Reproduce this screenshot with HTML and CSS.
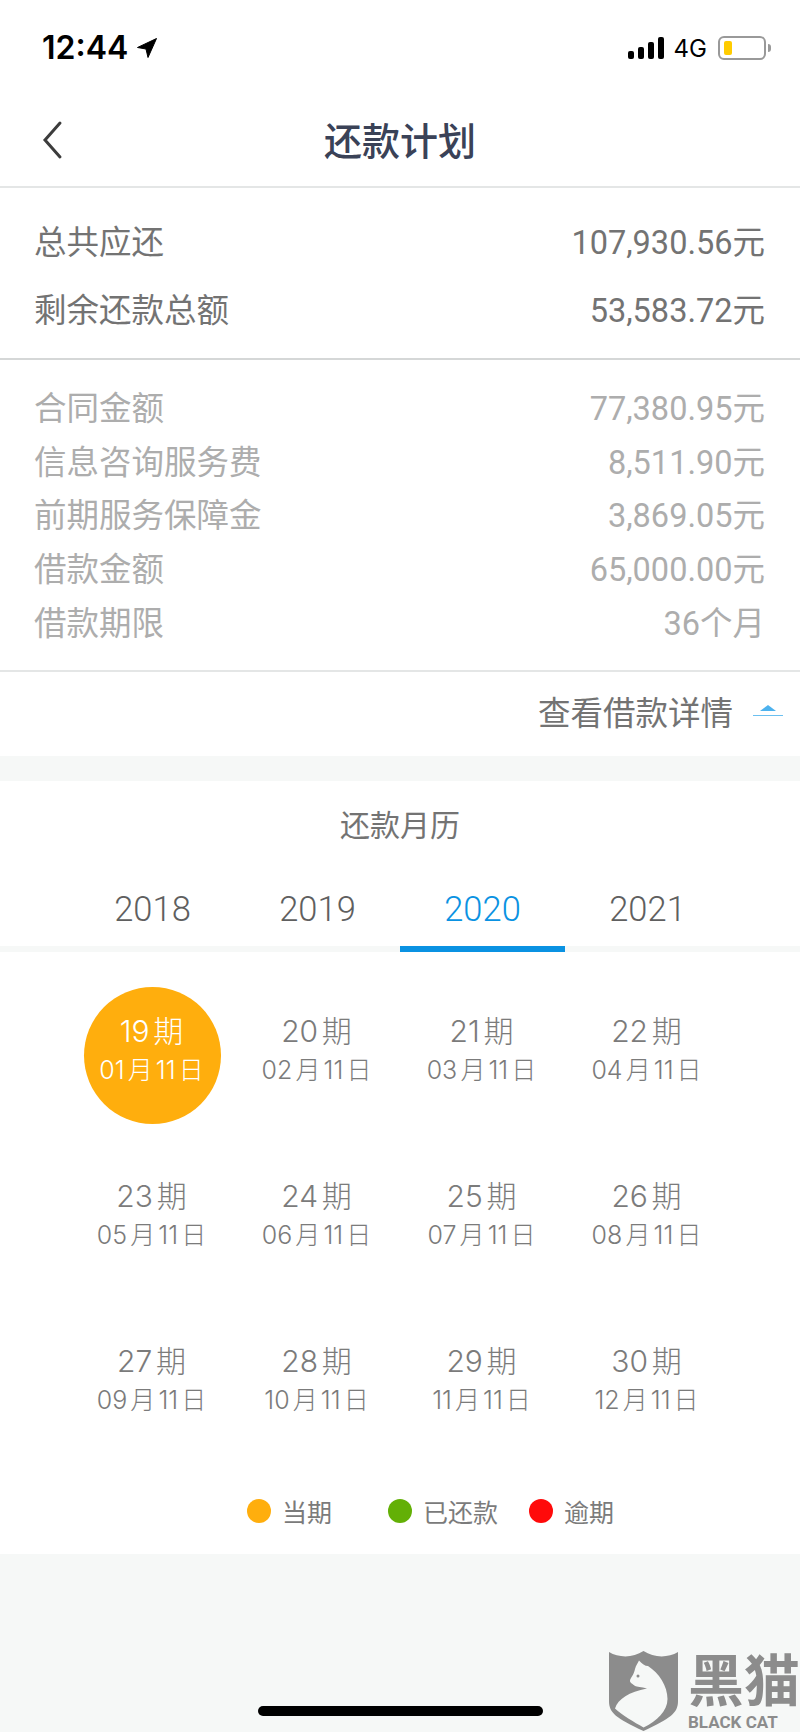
FILE: index.html
```html
<!DOCTYPE html>
<html lang="zh-CN">

<head>
    <meta charset="UTF-8">
    <meta name="viewport" content="width=device-width, initial-scale=1.0">
    <title>还款计划</title>
    <link rel="stylesheet" href="styles.css">
</head>

<body>
    <div class="page">
        <div class="status-bar">
            <div class="status-time">
                <span>12:44</span>
                <svg class="status-arrow" viewBox="0 0 20 20">
                    <path d="M19.5 0.5 L0.5 9.5 L9 11 L11 19.5 Z" fill="#000" stroke="#000" stroke-width="1" stroke-linejoin="round" />
                </svg>
            </div>
            <div class="status-right">
                <div class="signal">
                    <i class="bar-1"></i>
                    <i class="bar-2"></i>
                    <i class="bar-3"></i>
                    <i class="bar-4"></i>
                </div>
                <span class="network">4G</span>
                <div class="battery">
                    <div class="battery-level"></div>
                </div>
                <div class="battery-tip"></div>
            </div>
        </div>

        <div class="nav-bar">
            <svg class="nav-back" viewBox="0 0 24 40">
                <path d="M20 3 L5 20 L20 37" fill="none" stroke="#3c3c3c" stroke-width="3" stroke-linecap="round" stroke-linejoin="miter" />
            </svg>
            <h1 class="nav-title">还款计划</h1>
        </div>

        <div class="summary">
            <div class="summary-row"><span>总共应还</span><span>107,930.56元</span></div>
            <div class="summary-row"><span>剩余还款总额</span><span>53,583.72元</span></div>
        </div>

        <div class="details">
            <div class="details-row"><span>合同金额</span><span>77,380.95元</span></div>
            <div class="details-row"><span>信息咨询服务费</span><span>8,511.90元</span></div>
            <div class="details-row"><span>前期服务保障金</span><span>3,869.05元</span></div>
            <div class="details-row"><span>借款金额</span><span>65,000.00元</span></div>
            <div class="details-row"><span>借款期限</span><span>36个月</span></div>
        </div>

        <div class="more-row">
            <span>查看借款详情</span>
            <div class="more-icon">
                <svg viewBox="0 0 30 12">
                    <path d="M15 0 L23 6 L7 6 Z" fill="#4db2ee" />
                    <path d="M0 10.5 H30" stroke="#6cc0f0" stroke-width="1" />
                </svg>
            </div>
        </div>

        <div class="calendar">
            <div class="calendar-title">还款月历</div>

            <div class="tabs">
                <div class="tab">2018</div>
                <div class="tab">2019</div>
                <div class="tab tab-active">2020</div>
                <div class="tab">2021</div>
            </div>

            <div class="periods">
                <div class="period period-current"><b>19期</b><span>01月11日</span></div>
                <div class="period"><b>20期</b><span>02月11日</span></div>
                <div class="period"><b>21期</b><span>03月11日</span></div>
                <div class="period"><b>22期</b><span>04月11日</span></div>
                <div class="period"><b>23期</b><span>05月11日</span></div>
                <div class="period"><b>24期</b><span>06月11日</span></div>
                <div class="period"><b>25期</b><span>07月11日</span></div>
                <div class="period"><b>26期</b><span>08月11日</span></div>
                <div class="period"><b>27期</b><span>09月11日</span></div>
                <div class="period"><b>28期</b><span>10月11日</span></div>
                <div class="period"><b>29期</b><span>11月11日</span></div>
                <div class="period"><b>30期</b><span>12月11日</span></div>
            </div>

            <div class="legend">
                <div class="legend-item"><i class="dot dot-orange"></i>当期</div>
                <div class="legend-item"><i class="dot dot-green"></i>已还款</div>
                <div class="legend-item"><i class="dot dot-red"></i>逾期</div>
            </div>
        </div>

        <div class="home-bar"></div>

        <div class="watermark">
            <svg class="watermark-shield" viewBox="0 0 69 80">
                <path d="M0 1 C10 7 24 7 34.5 0 C45 7 59 7 69 1 V50 C69 62 62 67 34.5 80 C7 67 0 62 0 50 Z" fill="#8c8c8c" />
                <path d="M30 9.5 C33 13 36 15 39 15 C50 22 58.5 35 58.5 48 C58.5 60 48 70 34.5 76.5 C25 71 13 64 6 57.5 C9 48 20 41 38 37.5 C32 36 28 36 26 35 C24 33 21 32 21 30 C21 27 25 24 26 18 C27 14 29 12 30 9.5 Z" fill="#f6f8f7" />
                <circle cx="29" cy="25" r="1.5" fill="#8c8c8c" />
            </svg>
            <div class="watermark-text">
                <div class="watermark-cn">黑猫</div>
                <div class="watermark-en">BLACK CAT</div>
            </div>
        </div>
    </div>
</body>

</html>
```

FILE: styles.css
```css
* {
    box-sizing: border-box;
}

body {
    margin: 0;
    background-color: #f6f8f7;
    font-family: Roboto, "Noto Sans CJK SC", sans-serif;
}

.page {
    position: relative;
    width: 800px;
    height: 1732px;
    overflow: hidden;
}

/* status bar */
.status-bar {
    height: 92px;
    padding: 30px 29px 0 42px;
    background-color: #fff;
    display: flex;
    justify-content: space-between;
    align-items: flex-start;
}

.status-time {
    display: flex;
    align-items: center;
    gap: 9px;
    font-family: Inter, sans-serif;
    font-size: 32px;
    font-weight: 600;
    line-height: 36px;
    color: #000;
}

.status-arrow {
    width: 20px;
    height: 20px;
}

.status-right {
    display: flex;
    align-items: center;
    height: 36px;
}

.signal {
    display: flex;
    align-items: flex-end;
    gap: 4px;
    height: 22px;
    margin-right: 10px;
}

.signal i {
    display: block;
    width: 6px;
    background-color: #000;
    border-radius: 2px;
}

.signal .bar-1 { height: 8px; }
.signal .bar-2 { height: 12px; }
.signal .bar-3 { height: 17px; }
.signal .bar-4 { height: 22px; }

.network {
    font-family: Inter, sans-serif;
    font-size: 24px;
    font-weight: 400;
    color: #000;
    margin-right: 11px;
}

.battery {
    width: 48px;
    height: 24px;
    padding: 3px 4px;
    border: 2px solid #999;
    border-radius: 6px;
}

.battery-level {
    width: 8px;
    height: 100%;
    background-color: #ffcc00;
    border-radius: 2px;
}

.battery-tip {
    width: 3px;
    height: 8px;
    margin-left: 2px;
    background-color: #999;
    border-radius: 0 3px 3px 0;
}

/* nav */
.nav-bar {
    position: relative;
    height: 96px;
    background-color: #fff;
    border-bottom: 2px solid #e4e6e6;
    display: flex;
    align-items: center;
    justify-content: center;
    padding-bottom: 2px;
}

.nav-back {
    position: absolute;
    left: 38px;
    top: 28px;
    width: 28px;
    height: 40px;
}

.nav-title {
    margin: 0;
    font-size: 38px;
    font-weight: 500;
    color: #3a4257;
}

/* amounts */
.summary {
    padding: 17px 35px 17px 34px;
    background-color: #fff;
    border-bottom: 2px solid #d5d7d7;
}

.summary-row {
    height: 68px;
    display: flex;
    justify-content: space-between;
    align-items: center;
    font-size: 32.5px;
    color: #737373;
}

.details {
    padding: 19px 35px 23px 34px;
    background-color: #fff;
    border-bottom: 2px solid #e4e6e6;
}

.details-row {
    height: 53.6px;
    display: flex;
    justify-content: space-between;
    align-items: center;
    font-size: 32.5px;
    color: #adadad;
}

.more-row {
    height: 84px;
    padding: 0 17px 6px 0;
    background-color: #fff;
    display: flex;
    justify-content: flex-end;
    align-items: center;
    font-size: 32.5px;
    color: #737373;
}

.more-icon {
    width: 30px;
    height: 12px;
    margin-left: 20px;
    display: flex;
}

/* calendar */
.calendar {
    margin-top: 25px;
    height: 773px;
    background-color: #fff;
}

.calendar-title {
    height: 88px;
    padding-bottom: 4px;
    display: flex;
    justify-content: center;
    align-items: center;
    font-size: 30px;
    color: #737373;
}

.tabs {
    height: 83px;
    padding-left: 70px;
    display: grid;
    grid-template-columns: repeat(4, 165px);
    border-bottom: 6px solid #f6f8f7;
}

.tab {
    height: 83px;
    padding-top: 4px;
    display: flex;
    justify-content: center;
    align-items: center;
    font-size: 34.5px;
    font-weight: 300;
    color: #5f5f5f;
    border-bottom: 6px solid transparent;
}

.tab-active {
    color: #0a92e2;
    border-bottom-color: #0a92e2;
}

.periods {
    padding: 35px 0 0 70px;
    display: grid;
    grid-template-columns: repeat(4, 165px);
    grid-auto-rows: 137px;
    row-gap: 28px;
}

.period {
    width: 137px;
    margin: 0 auto;
    padding: 0 2px 8px 0;
    border-radius: 50%;
    display: flex;
    flex-direction: column;
    justify-content: center;
    align-items: center;
    font-family: Inter, "Noto Sans CJK SC", sans-serif;
    font-weight: 300;
    color: #7b7b7b;
    text-autospace: normal;
}

.period b {
    font-size: 30px;
    font-weight: 300;
    line-height: 37px;
    margin-bottom: 1px;
}

.period span {
    font-size: 25px;
    line-height: 38px;
    white-space: nowrap;
}

.period-current {
    background-color: #ffae0d;
    color: #fff;
}

.legend {
    margin-top: 35px;
    height: 44px;
    padding-left: 247px;
    display: grid;
    grid-template-columns: repeat(3, 141px);
}

.legend-item {
    display: flex;
    align-items: center;
    gap: 11px;
    font-size: 25px;
    color: #7b7b7b;
    white-space: nowrap;
}

.dot {
    width: 24px;
    height: 24px;
    border-radius: 50%;
}

.dot-orange { background-color: #ffae0d; }
.dot-green { background-color: #63b006; }
.dot-red { background-color: #ff0a0a; }

/* overlays */
.home-bar {
    position: absolute;
    left: 258px;
    bottom: 16px;
    width: 285px;
    height: 10px;
    background-color: #000;
    border-radius: 5px;
}

.watermark {
    position: absolute;
    left: 609px;
    top: 1651px;
    display: flex;
    gap: 10px;
}

.watermark-shield {
    width: 69px;
    height: 80px;
}

.watermark-text {
    color: #8c8c8c;
    font-weight: 700;
    white-space: nowrap;
}

.watermark-cn {
    font-size: 56px;
    line-height: 62px;
}

.watermark-en {
    font-size: 17px;
    line-height: 18px;
}
```
